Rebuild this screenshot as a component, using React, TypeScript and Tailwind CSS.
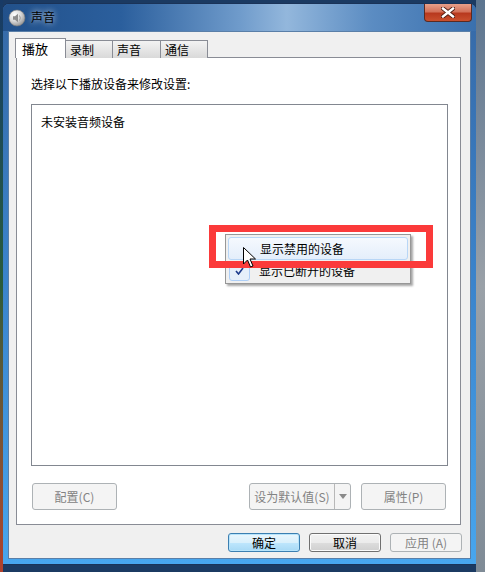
import React from "react";

const font = { fontFamily: '"Noto Sans CJK SC", "Noto Sans", sans-serif' };

function SpeakerIcon() {
  return (
    <svg width="18" height="18" viewBox="0 0 18 18">
      <defs>
        <radialGradient id="sg" cx="0.35" cy="0.3" r="0.8">
          <stop offset="0" stopColor="#ffffff" />
          <stop offset="0.5" stopColor="#d8d8d8" />
          <stop offset="1" stopColor="#8a8a8a" />
        </radialGradient>
      </defs>
      <circle cx="9" cy="9" r="8" fill="url(#sg)" stroke="#7a7a7a" strokeWidth="0.6" />
      <path d="M5 7.2h2l3-2.4v8.4l-3-2.4H5z" fill="#8d8d8d" />
      <path d="M11.5 6.5q1.6 2.5 0 5" stroke="#9a9a9a" strokeWidth="1" fill="none" />
    </svg>
  );
}

function DisabledBtn({ label, className }: { label: string; className: string }) {
  return (
    <div
      className={
        "flex items-center justify-center rounded-[3px] border border-[#adb2b5] bg-[#f4f4f4] text-[12px] text-[#838383] " +
        className
      }
    >
      {label}
    </div>
  );
}

export default function App() {
  return (
    <div className="relative h-[572px] w-[485px] overflow-hidden bg-[#1b3a62]" style={font}>
      {/* desktop right strip */}
      <div className="absolute right-0 top-0 h-full w-[9px] bg-gradient-to-b from-[#5c7590] via-[#9aa1a8] to-[#7f8b96]" />
      <div className="absolute left-0 top-0 h-full w-[3px] bg-gradient-to-b from-[#183a66] via-[#2a5b3a] to-[#b0402c]" />

      <div className="flex pl-[2px] pt-[3px]">
        {/* window */}
        <div className="flex h-[562px] w-[475px] flex-col rounded-t-[7px] border border-[#1a3358] bg-gradient-to-b from-[#3669a6] via-[#3b84cc] to-[#48a6ee]">
          {/* title bar */}
          <div className="flex h-[27px] items-start rounded-t-[6px] bg-[linear-gradient(90deg,#22518b_0%,#2b5f9d_25%,#6f9bcb_50%,#93b7dc_60%,#5b8cc2_78%,#3a70ae_100%)]">
            <div className="ml-[5px] mt-[5px]">
              <SpeakerIcon />
            </div>
            <div className="ml-[5px] mt-[5px] text-[12px] leading-[16px] text-black [text-shadow:0_0_6px_rgba(255,255,255,0.95)]">
              声音
            </div>
            <div className="flex-1" />
            <div className="mr-[4px] flex h-[18px] w-[48px] items-center justify-center rounded-b-[4px] border border-t-0 border-[#5a2a22] bg-[linear-gradient(180deg,#e8a08a_0%,#d3725a_45%,#b8391e_55%,#c9502e_100%)]">
              <svg width="14" height="11" viewBox="0 0 14 11">
                <path d="M2 1.5L12 9.5M12 1.5L2 9.5" stroke="#4a1a10" strokeWidth="4.2" strokeLinecap="square" />
                <path d="M2 1.5L12 9.5M12 1.5L2 9.5" stroke="#ffffff" strokeWidth="2.4" strokeLinecap="square" />
              </svg>
            </div>
          </div>

          {/* client area */}
          <div className="mx-[5px] mb-[5px] flex flex-1 flex-col border border-[#5a7fa8] bg-[#f0f0f0] pl-[6px] pt-[6px]">
            {/* tabs */}
            <div className="relative z-10 flex h-[20px] items-end">
              <div className="flex h-[20px] w-[51px] items-center border border-b-0 border-[#898c95] bg-white pl-[6px] text-[13px] leading-none text-black">
                播放
              </div>
              <div className="flex h-[18px] w-[47px] items-center border border-b-0 border-l-0 border-[#898c95] bg-gradient-to-b from-[#f3f3f3] to-[#d9d9d9] pl-[4px] text-[12px] leading-none text-black">
                录制
              </div>
              <div className="flex h-[18px] w-[48px] items-center border border-b-0 border-l-0 border-[#898c95] bg-gradient-to-b from-[#f3f3f3] to-[#d9d9d9] pl-[4px] text-[12px] leading-none text-black">
                声音
              </div>
              <div className="flex h-[18px] w-[47px] items-center border border-b-0 border-l-0 border-[#898c95] bg-gradient-to-b from-[#f3f3f3] to-[#d9d9d9] pl-[4px] text-[12px] leading-none text-black">
                通信
              </div>
            </div>

            {/* panel */}
            <div className="ml-[1px] -mt-[1px] flex h-[468px] w-[445px] flex-col border border-[#898c95] bg-white">
              <div className="ml-[14px] mt-[18px] text-[12px] leading-[16px] text-black">选择以下播放设备来修改设置:</div>
              <div className="ml-[14px] mt-[12px] h-[362px] w-[417px] border border-[#828790] bg-white pl-[9px] pt-[9px]">
                <div className="text-[12px] leading-[16px] text-black">未安装音频设备</div>
              </div>
              <div className="mt-[17px] flex h-[27px]">
                <DisabledBtn label="配置(C)" className="ml-[15px] w-[85px]" />
                <div className="ml-[132px] flex h-[27px] w-[102px] items-center rounded-[3px] border border-[#adb2b5] bg-[#f4f4f4] text-[12px] text-[#838383]">
                  <div className="flex-1 text-center">设为默认值(S)</div>
                  <div className="h-[25px] w-px bg-[#b8b8b8]" />
                  <div className="flex w-[15px] items-center justify-center">
                    <svg width="8" height="5" viewBox="0 0 8 5">
                      <path d="M0 0h8L4 5z" fill="#8a8a8a" />
                    </svg>
                  </div>
                </div>
                <DisabledBtn label="属性(P)" className="ml-[10px] w-[85px]" />
              </div>
            </div>

            {/* bottom buttons */}
            <div className="mt-[8px] flex justify-end gap-[9px] pr-[8px]">
              <div className="flex h-[19px] w-[72px] items-center justify-center rounded-[3px] border border-[#3c7fb1] bg-[linear-gradient(180deg,#eaf6fd_0%,#d9f0fc_50%,#bee6fd_51%,#a7d9f5_100%)] text-[12px] text-black shadow-[inset_0_0_0_1px_#b8e4fb]">
                确定
              </div>
              <div className="flex h-[19px] w-[72px] items-center justify-center rounded-[3px] border border-[#707070] bg-[linear-gradient(180deg,#f2f2f2_0%,#ebebeb_50%,#dddddd_51%,#cfcfcf_100%)] text-[12px] text-black shadow-[inset_0_0_0_1px_#fbfbfb]">
                取消
              </div>
              <div className="flex h-[19px] w-[72px] items-center justify-center rounded-[3px] border border-[#adb2b5] bg-[#f4f4f4] text-[12px] text-[#838383]">
                应用 (A)
              </div>
            </div>
          </div>
        </div>
      </div>

      {/* context menu */}
      <div className="absolute left-[225px] top-[234px] h-[50px] w-[186px] border border-[#979797] bg-[#f0f0f0] p-[2px] shadow-[2px_2px_2px_rgba(0,0,0,0.35)]">
        <div className="flex h-[23px] items-center rounded-[3px] border border-[#b8d6f6] bg-[linear-gradient(180deg,#f5f9fe_0%,#e4eefb_100%)] pl-[31px] text-[12px] text-black">
          显示禁用的设备
        </div>
        <div className="flex h-[22px] items-center">
          <div className="ml-[1px] flex h-[20px] w-[21px] items-center justify-center rounded-[3px] border border-[#aecff7] bg-[#e6f0fa]">
            <svg width="9" height="8" viewBox="0 0 9 8">
              <path d="M1 4l2.5 3L8 1" stroke="#1e3c8c" strokeWidth="1.6" fill="none" />
            </svg>
          </div>
          <div className="ml-[9px] text-[12px] text-black">显示已断开的设备</div>
        </div>
      </div>

      {/* red highlight box */}
      <div className="absolute left-[209px] top-[225px] h-[43px] w-[224px] border-[7px] border-[#fb3a3a]" />

      {/* cursor */}
      <svg className="absolute left-[243px] top-[247px]" width="13" height="21" viewBox="0 0 13 21">
        <path d="M0.5 0.5V17L4.5 13L7.5 20L10 19L7 12H12.5Z" fill="#fff" stroke="#000" strokeWidth="1" />
      </svg>
    </div>
  );
}
